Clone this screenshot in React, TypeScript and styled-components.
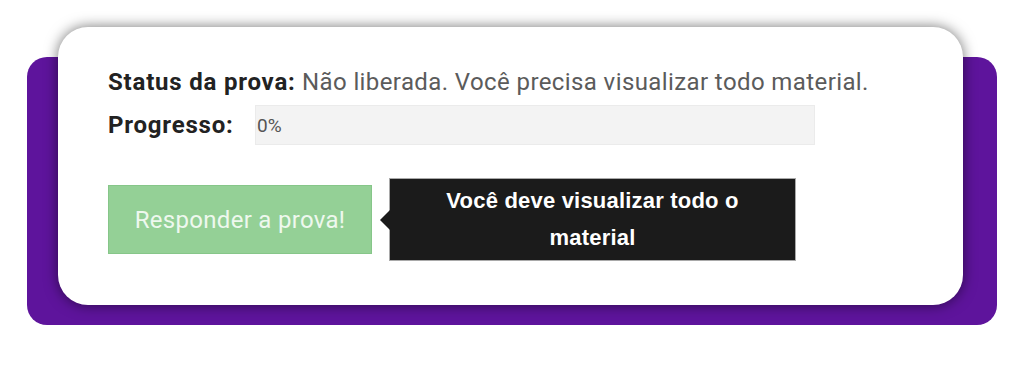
import * as React from 'react';
import styled, { createGlobalStyle } from 'styled-components';

const GlobalStyle = createGlobalStyle`
  html, body {
    margin: 0;
    padding: 0;
    background: #ffffff;
  }
  body {
    font-family: Roboto, "Roboto Condensed", "Liberation Sans", sans-serif;
  }
`;

const Stage = styled.div`
  width: 1024px;
  height: 369px;
  padding-top: 57px;
  box-sizing: border-box;
  overflow: hidden;
`;

const PurplePanel = styled.div`
  margin-left: 27px;
  width: 970px;
  height: 268px;
  background: #5e149c;
  border-radius: 20px;
`;

const Card = styled.div`
  position: relative;
  top: -30px;
  margin-left: 31px;
  width: 905px;
  height: 278px;
  box-sizing: border-box;
  padding: 40px 50px 0;
  background: #ffffff;
  border-radius: 30px;
  box-shadow: 0 0 14px rgba(0, 0, 0, 0.55);
`;

const StatusLine = styled.div`
  font-size: 24px;
  line-height: 30px;
  letter-spacing: 0.4px;
  color: #5b5b5b;
  white-space: nowrap;
`;

const Label = styled.span`
  font-weight: 700;
  letter-spacing: 0.8px;
  color: #222222;
`;

const ProgressRow = styled.div`
  display: flex;
  align-items: center;
  margin-top: 8px;
  height: 40px;
`;

const ProgressLabel = styled(Label)`
  width: 147px;
  font-size: 24px;
`;

const ProgressBar = styled.div`
  width: 560px;
  height: 40px;
  box-sizing: border-box;
  display: flex;
  align-items: center;
  padding-left: 1px;
  background: #f3f3f3;
  border: 1px solid #ebebeb;
  font-size: 19px;
  color: #555555;
`;

const ActionRow = styled.div`
  display: flex;
  align-items: center;
  margin-top: 33px;
`;

const AnswerButton = styled.button`
  width: 264px;
  height: 69px;
  padding: 0;
  background: #94d096;
  border: 1px solid #86c689;
  color: #eef8ee;
  font-family: inherit;
  font-size: 24px;
  letter-spacing: 0.3px;
  cursor: not-allowed;
`;

const Tooltip = styled.div`
  position: relative;
  margin-left: 17px;
  width: 407px;
  height: 83px;
  box-sizing: border-box;
  padding-top: 3px;
  background: #1b1b1b;
  border: 1px solid #a9a9a9;
  color: #ffffff;
  font-family: "Liberation Sans", Arial, sans-serif;
  font-weight: 700;
  font-size: 22px;
  line-height: 37px;
  letter-spacing: 0.2px;
  text-align: center;

  &::before {
    content: '';
    position: absolute;
    left: -10px;
    top: 50%;
    margin-top: -10px;
    border-style: solid;
    border-width: 10px 10px 10px 0;
    border-color: transparent #1b1b1b transparent transparent;
  }
`;

const TooltipText = styled.div`
  width: 330px;
  margin: 0 auto;
`;

export default function App() {
  return (
    <>
      <GlobalStyle />
      <Stage>
        <PurplePanel>
          <Card>
            <StatusLine>
              <Label>Status da prova:</Label> Não liberada. Você precisa visualizar todo material.
            </StatusLine>
            <ProgressRow>
              <ProgressLabel>Progresso:</ProgressLabel>
              <ProgressBar>0%</ProgressBar>
            </ProgressRow>
            <ActionRow>
              <AnswerButton disabled>Responder a prova!</AnswerButton>
              <Tooltip>
                <TooltipText>Você deve visualizar todo o material</TooltipText>
              </Tooltip>
            </ActionRow>
          </Card>
        </PurplePanel>
      </Stage>
    </>
  );
}
